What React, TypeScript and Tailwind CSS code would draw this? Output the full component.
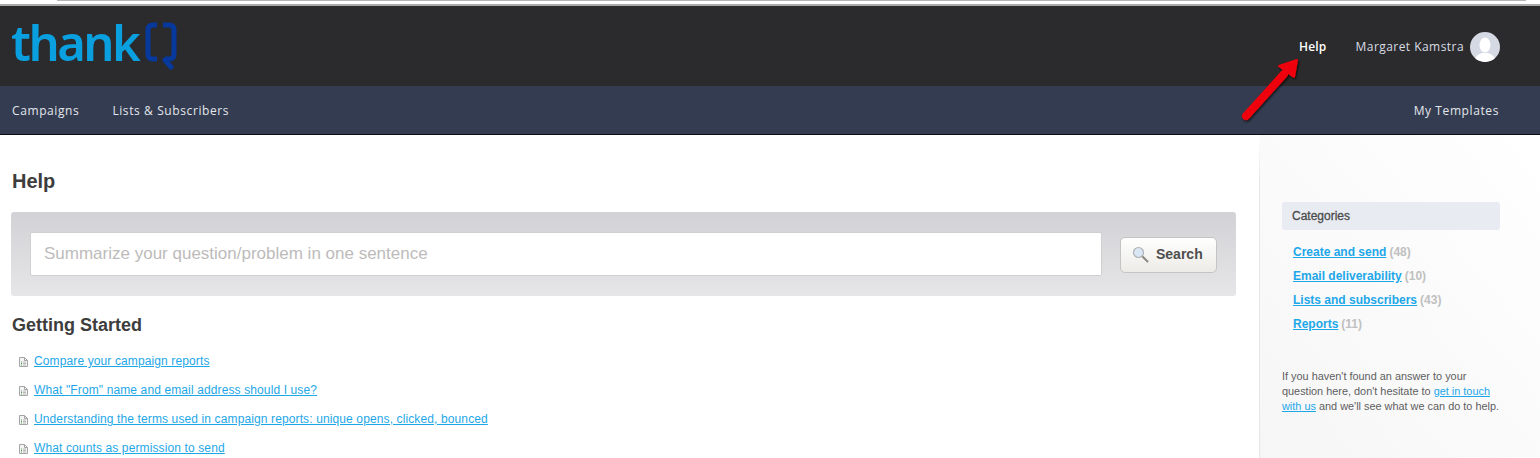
const articles = [
  'Compare your campaign reports',
  'What "From" name and email address should I use?',
  'Understanding the terms used in campaign reports: unique opens, clicked, bounced',
  'What counts as permission to send',
];

const categories = [
  { name: 'Create and send', count: 48 },
  { name: 'Email deliverability', count: 10 },
  { name: 'Lists and subscribers', count: 43 },
  { name: 'Reports', count: 11 },
];

function DocIcon() {
  return (
    <svg width="9" height="10" viewBox="0 0 9 10" className="shrink-0">
      <path d="M0.5 0.5H5.5L8.5 3.5V9.5H0.5Z" fill="#f4f4f4" stroke="#a5a5a5" />
      <path d="M5.5 0.5V3.5H8.5" fill="none" stroke="#a5a5a5" />
      <path d="M2 5H3M2 6.5H3M2 8H3" stroke="#5d9a5d" />
      <path d="M4 5H7M4 6.5H7M4 8H7" stroke="#b8b8b8" />
    </svg>
  );
}

function SearchIcon() {
  return (
    <svg width="17" height="17" viewBox="0 0 17 17">
      <path d="M10 10L15.5 15.5" stroke="#8a8880" strokeWidth="2" strokeLinecap="round" />
      <circle cx="6.500" cy="6.500" r="5" fill="#d9e6f3" stroke="#b0b4b8" strokeWidth="1.200" />
    </svg>
  );
}

function LogoQ() {
  return (
    <svg width="32" height="48" viewBox="0 0 32 48" className="shrink-0">
      <path d="M12 3H8Q3 3 3 8V32Q3 37 8 37H12" fill="none" stroke="#06399b" strokeWidth="5" />
      <path d="M18 3H24Q29 3 29 8V32Q29 37 24 37H20" fill="none" stroke="#06399b" strokeWidth="5" />
      <path d="M20 38L26 45" fill="none" stroke="#06399b" strokeWidth="5" strokeLinecap="round" />
    </svg>
  );
}

export default function App() {
  return (
    <div className="relative h-[458px] w-[1540px] overflow-hidden bg-white font-['Liberation_Sans',Arial,sans-serif]">
      {/* browser chrome leftover */}
      <div className="h-[6px] border-b-2 border-[#a9a9a9] bg-white">
        <div className="ml-[57px] mr-[14px] h-px bg-[#b5b5b5]" />
      </div>

      <header className="flex h-[80px] items-start justify-between bg-[#2b2a2c] pl-[11px] pr-10 font-['Open_Sans',sans-serif]">
        <div className="flex items-start pt-[11px]">
          <span className="font-['Noto_Sans',sans-serif] text-[49px] font-semibold leading-[50px] tracking-[-2.500px] text-[#0a9fdf]">
            thank
          </span>
          <span className="ml-[7px] mt-[5px]">
            <LogoQ />
          </span>
        </div>
        <div className="flex items-center pt-[26px] text-[12px]">
          <a className="font-semibold tracking-[0.2px] text-white">Help</a>
          <span className="ml-[29px] tracking-[0.45px] text-[#d8dde6]">Margaret Kamstra</span>
          <span className="ml-[6px] flex h-[30px] w-[30px] items-end justify-center overflow-hidden rounded-full bg-[#d5d9e3]">
            <svg width="22" height="25" viewBox="0 0 22 25">
              <ellipse cx="11" cy="8" rx="5.500" ry="7.500" fill="#fff" />
              <path d="M0 25Q1 18 8 16H14Q21 18 22 25Z" fill="#fff" />
            </svg>
          </span>
        </div>
      </header>

      <nav className="flex h-[49px] items-center justify-between border-b border-[#0c0d10] bg-[#333c50] pl-[12px] pr-[41px] pt-[2px] font-['Open_Sans',sans-serif] text-[12px] tracking-[0.6px] text-[#e3e6ec]">
        <div className="flex gap-[33px]">
          <a>Campaigns</a>
          <a>Lists &amp; Subscribers</a>
        </div>
        <a>My Templates</a>
      </nav>

      <main className="flex">
        <section className="w-[1259px] shrink-0 pl-[11px] pr-[23px]">
          <h1 className="ml-px mt-[35px] text-[20px] font-bold leading-[23px] text-[#3d3d3d]">Help</h1>

          <div className="mt-[19px] flex h-[84px] items-center rounded-[3px] bg-gradient-to-b from-[#d2d2d6] to-[#e6e6e8] pl-[19px] pr-[19px]">
            <input
              readOnly
              placeholder="Summarize your question/problem in one sentence"
              className="h-[44px] w-[1072px] rounded-[2px] border border-[#d0d0d0] bg-white px-[13px] text-[17px] text-[#555] outline-none placeholder:text-[#bdbbbb]"
            />
            <button className="ml-[18px] mt-px flex h-[36px] w-[97px] items-center rounded-[5px] border border-[#c4c4c2] bg-gradient-to-b from-white to-[#ecebe6] pl-[11px] text-[14px] font-bold text-[#4e4e4e]">
              <SearchIcon />
              <span className="ml-[7px]">Search</span>
            </button>
          </div>

          <h2 className="ml-px mt-[19px] text-[18px] font-bold leading-[21px] text-[#3d3d3d]">Getting Started</h2>

          <ul className="mt-[18px] flex flex-col gap-[14px] pl-[8px] text-[12px] leading-[15px] tracking-[0.12px]">
            {articles.map((title) => (
              <li key={title} className="flex items-center gap-[6px]">
                <DocIcon />
                <a className="text-[#1ea7e8] underline">{title}</a>
              </li>
            ))}
          </ul>
        </section>

        <aside className="h-[324px] flex-1 border-l bg-gradient-to-bl from-white to-[#f6f6f7] pl-[22px] pr-10 [border-image:linear-gradient(to_bottom,#ffffff,#e6e6e6_15%)_1]">
          <div className="mt-[67px] flex h-[28px] items-center rounded-[3px] bg-[#e8ebf2] pl-[10px] text-[12px] text-[#4b4b4b]">
            <span className="[-webkit-text-stroke:0.3px_#4b4b4b]">Categories</span>
          </div>
          <ul className="mt-[10px] flex flex-col pl-[11px] text-[12px] leading-[24px]">
            {categories.map((c) => (
              <li key={c.name} className="font-bold">
                <a className="text-[#1ea7e8] underline">{c.name}</a>
                <span className="ml-[3px] text-[#c0c0c0]">({c.count})</span>
              </li>
            ))}
          </ul>
          <p className="mt-[33px] text-[10.900px] leading-[15px] text-[#5e5e5e]">
            If you haven't found an answer to your question here, don't hesitate to{' '}
            <a className="text-[#1ea7e8] underline">get in touch with us</a> and we'll see what we can do to help.
          </p>
        </aside>
      </main>

      {/* red annotation arrow */}
      <svg width="64" height="68" viewBox="0 0 64 68" className="absolute left-[1238px] top-[57px]">
        <defs>
          <filter id="arrowShadow" x="-20%" y="-20%" width="150%" height="150%">
            <feDropShadow dx="1" dy="1.500" stdDeviation="1.200" floodColor="#000" floodOpacity="0.7" />
          </filter>
        </defs>
        <g filter="url(#arrowShadow)">
          <path d="M8 59L46 17" stroke="#ee0008" strokeWidth="8" strokeLinecap="round" />
          <path d="M59 3L41 9L56 20Z" fill="#ee0008" stroke="#ee0008" strokeWidth="2" strokeLinejoin="round" />
        </g>
      </svg>
    </div>
  );
}
